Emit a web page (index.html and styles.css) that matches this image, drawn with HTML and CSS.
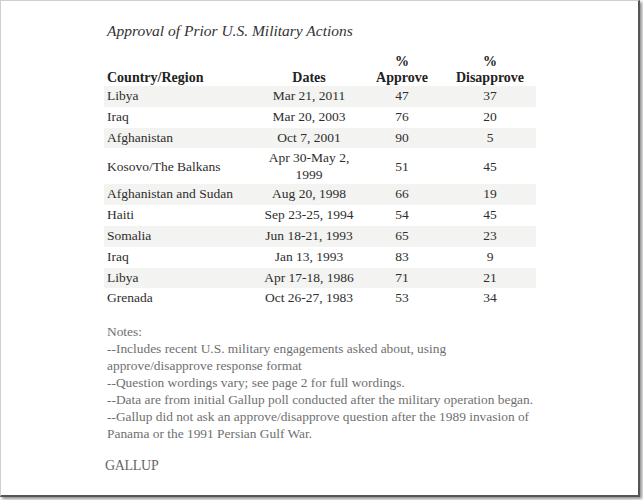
FILE: index.html
```html
<!DOCTYPE html>
<html>
<head>
<meta charset="utf-8">
<link rel="stylesheet" href="styles.css">
</head>
<body>
<div class="frame">
  <div class="content">
    <h1 class="title">Approval of Prior U.S. Military Actions</h1>
    <table class="data">
      <colgroup>
        <col class="c-country"><col class="c-dates"><col class="c-app"><col class="c-dis">
      </colgroup>
      <thead>
        <tr>
          <th class="left">Country/Region</th>
          <th>Dates</th>
          <th>%<br>Approve</th>
          <th>%<br>Disapprove</th>
        </tr>
      </thead>
      <tbody>
        <tr class="shade"><td class="left">Libya</td><td>Mar 21, 2011</td><td>47</td><td>37</td></tr>
        <tr><td class="left">Iraq</td><td>Mar 20, 2003</td><td>76</td><td>20</td></tr>
        <tr class="shade"><td class="left">Afghanistan</td><td>Oct 7, 2001</td><td>90</td><td>5</td></tr>
        <tr class="tall"><td class="left">Kosovo/The Balkans</td><td>Apr 30-May 2,<br>1999</td><td>51</td><td>45</td></tr>
        <tr class="shade"><td class="left">Afghanistan and Sudan</td><td>Aug 20, 1998</td><td>66</td><td>19</td></tr>
        <tr><td class="left">Haiti</td><td>Sep 23-25, 1994</td><td>54</td><td>45</td></tr>
        <tr class="shade"><td class="left">Somalia</td><td>Jun 18-21, 1993</td><td>65</td><td>23</td></tr>
        <tr><td class="left">Iraq</td><td>Jan 13, 1993</td><td>83</td><td>9</td></tr>
        <tr class="shade"><td class="left">Libya</td><td>Apr 17-18, 1986</td><td>71</td><td>21</td></tr>
        <tr><td class="left">Grenada</td><td>Oct 26-27, 1983</td><td>53</td><td>34</td></tr>
      </tbody>
    </table>
    <div class="notes">
      <p>Notes:</p>
      <p>--Includes recent U.S. military engagements asked about, using<br>approve/disapprove response format</p>
      <p>--Question wordings vary; see page 2 for full wordings.</p>
      <p>--Data are from initial Gallup poll conducted after the military operation began.</p>
      <p>--Gallup did not ask an approve/disapprove question after the 1989 invasion of<br>Panama or the 1991 Persian Gulf War.</p>
    </div>
    <div class="brand">GALLUP</div>
  </div>
</div>
</body>
</html>
```

FILE: styles.css
```css
html, body {
  margin: 0;
  padding: 0;
  background: #ffffff;
}
body {
  width: 643px;
  height: 500px;
  overflow: hidden;
  font-family: "Liberation Serif", "Times New Roman", serif;
  color: #2e2e2e;
}
.frame {
  box-sizing: border-box;
  width: 640px;
  height: 497px;
  border-left: 1px solid #cfcfcf;
  border-top: 1px solid #cfcfcf;
  border-right: 2px solid #555555;
  border-bottom: 2px solid #555555;
  box-shadow: 2px 2px 3px rgba(0, 0, 0, 0.45);
  background: #ffffff;
}
.content {
  padding: 20px 0 0 103px;
}
.title {
  margin: 0 0 13px 3px;
  font-size: 15.5px;
  font-style: italic;
  font-weight: normal;
  color: #333333;
  line-height: 20px;
}
.data {
  border-collapse: collapse;
  width: 432px;
  table-layout: fixed;
  font-size: 13.5px;
}
.c-country { width: 154px; }
.c-dates { width: 102px; }
.c-app { width: 84px; }
.c-dis { width: 92px; }
.data th {
  font-weight: bold;
  font-size: 14px;
  text-align: center;
  vertical-align: bottom;
  line-height: 16px;
  padding: 0;
  color: #222222;
}
.data td {
  text-align: center;
  line-height: 20.8px;
  padding: 0;
  vertical-align: middle;
}
.data .left {
  text-align: left;
  padding-left: 3px;
}
.data tr.tall td {
  line-height: 17px;
  padding-top: 1px;
  padding-bottom: 1px;
}
.shade td { background: #f3f3f1; }
.notes {
  margin-top: 15px;
  padding-left: 3px;
  font-size: 13.4px;
  color: #6f6f6f;
  line-height: 16.9px;
}
.notes p { margin: 0; }
.brand {
  margin-top: 15px;
  padding-left: 1px;
  font-size: 14px;
  color: #666666;
  letter-spacing: -0.3px;
}
```
